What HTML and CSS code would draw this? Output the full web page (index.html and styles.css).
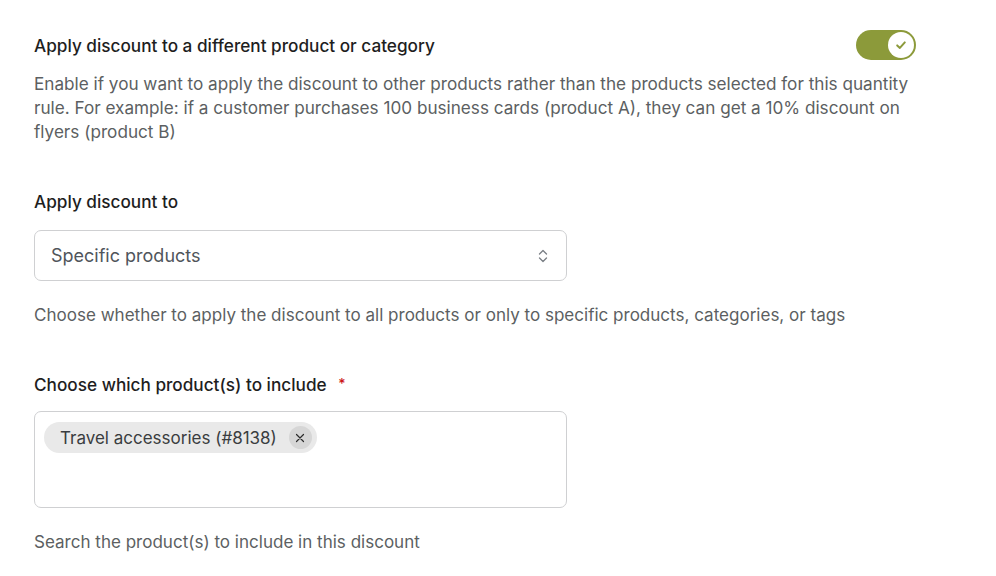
FILE: index.html
```html
<!DOCTYPE html>
<html>
<head>
<meta charset="utf-8">
<link rel="stylesheet" href="styles.css">
</head>
<body>
<div class="page">
  <section class="field">
    <div class="toggle-row">
      <div class="title">Apply discount to a different product or category</div>
      <div class="toggle">
        <span class="knob">
          <svg width="14" height="14" viewBox="0 0 14 14"><path d="M3.2 7.4 L5.9 9.9 L10.8 4.4" fill="none" stroke="#8c9a3a" stroke-width="2" stroke-linecap="round" stroke-linejoin="round"/></svg>
        </span>
      </div>
    </div>
    <p class="desc">Enable if you want to apply the discount to other products rather than the products selected for this quantity rule. For example: if a customer purchases 100 business cards (product A), they can get a 10% discount on flyers (product B)</p>
  </section>

  <section class="field f2">
    <div class="label">Apply discount to</div>
    <div class="select">
      <span>Specific products</span>
      <svg class="chev" width="12" height="18" viewBox="0 0 12 18"><path d="M2.5 7 L6 3.5 L9.5 7 M2.5 11 L6 14.5 L9.5 11" fill="none" stroke="#7a7f85" stroke-width="1.3" stroke-linecap="round" stroke-linejoin="round"/></svg>
    </div>
    <p class="help">Choose whether to apply the discount to all products or only to specific products, categories, or tags</p>
  </section>

  <section class="field f3">
    <div class="label">Choose which product(s) to include <span class="req">*</span></div>
    <div class="multi">
      <span class="chip">Travel accessories (#8138)
        <span class="x"><svg width="10" height="10" viewBox="0 0 10 10"><path d="M1.5 1.5 L8.5 8.5 M8.5 1.5 L1.5 8.5" stroke="#2c2c2c" stroke-width="1.2" stroke-linecap="round"/></svg></span>
      </span>
    </div>
    <p class="help">Search the product(s) to include in this discount</p>
  </section>
</div>
</body>
</html>
```
FILE: styles.css
```css
* { box-sizing: border-box; }
html, body { margin: 0; padding: 0; background: #fff; }
body {
  font-family: Inter, "Noto Sans", "Liberation Sans", sans-serif;
  color: #1e1e1e;
  -webkit-font-smoothing: antialiased;
}
.page {
  padding: 30px 0 0 34px;
  width: 920px;
}
.toggle-row {
  display: flex;
  justify-content: space-between;
  align-items: center;
  height: 30px;
}
.title, .label {
  font-size: 17.2px;
  font-weight: 500;
  color: #1e1e1e;
}
.toggle {
  width: 60px;
  height: 30px;
  border-radius: 15px;
  background: #8c9a3a;
  margin-right: 4px;
  display: flex;
  align-items: center;
  justify-content: flex-end;
  padding-right: 2px;
}
.knob {
  width: 26px;
  height: 26px;
  border-radius: 50%;
  background: #fff;
  display: flex;
  align-items: center;
  justify-content: center;
}
.desc {
  margin: 12px 0 0;
  font-size: 17.15px;
  line-height: 24px;
  color: #5c5f62;
  width: 886px;
}
.f2 { margin-top: 48px; }
.label { line-height: 20px; }
.select {
  margin-top: 18px;
  width: 533px;
  height: 51px;
  border: 1px solid #cfd0d2;
  border-radius: 7px;
  display: flex;
  align-items: center;
  justify-content: space-between;
  padding: 0 17px 0 16px;
  font-size: 18px;
  color: #50555b;
}
.help {
  margin: 22px 0 0;
  font-size: 17.05px;
  line-height: 24px;
  color: #5c5f62;
}
.f3 { margin-top: 47px; }
.req { color: #cc1818; margin-left: 7px; font-size: 14px; vertical-align: 2px; }
.multi {
  margin-top: 16px;
  width: 533px;
  height: 97px;
  border: 1px solid #cfd0d2;
  border-radius: 7px;
  padding: 10px 9px;
}
.chip {
  display: inline-flex;
  align-items: center;
  height: 31px;
  background: #e9e9e9;
  border-radius: 16px;
  padding: 0 5px 0 16px;
  font-size: 17px;
  color: #3a3d40;
}
.x {
  margin-left: 12px;
  width: 23px;
  height: 23px;
  border-radius: 50%;
  background: #d6d6d6;
  display: flex;
  align-items: center;
  justify-content: center;
}
.f3 .help { margin-top: 22px; }
```
